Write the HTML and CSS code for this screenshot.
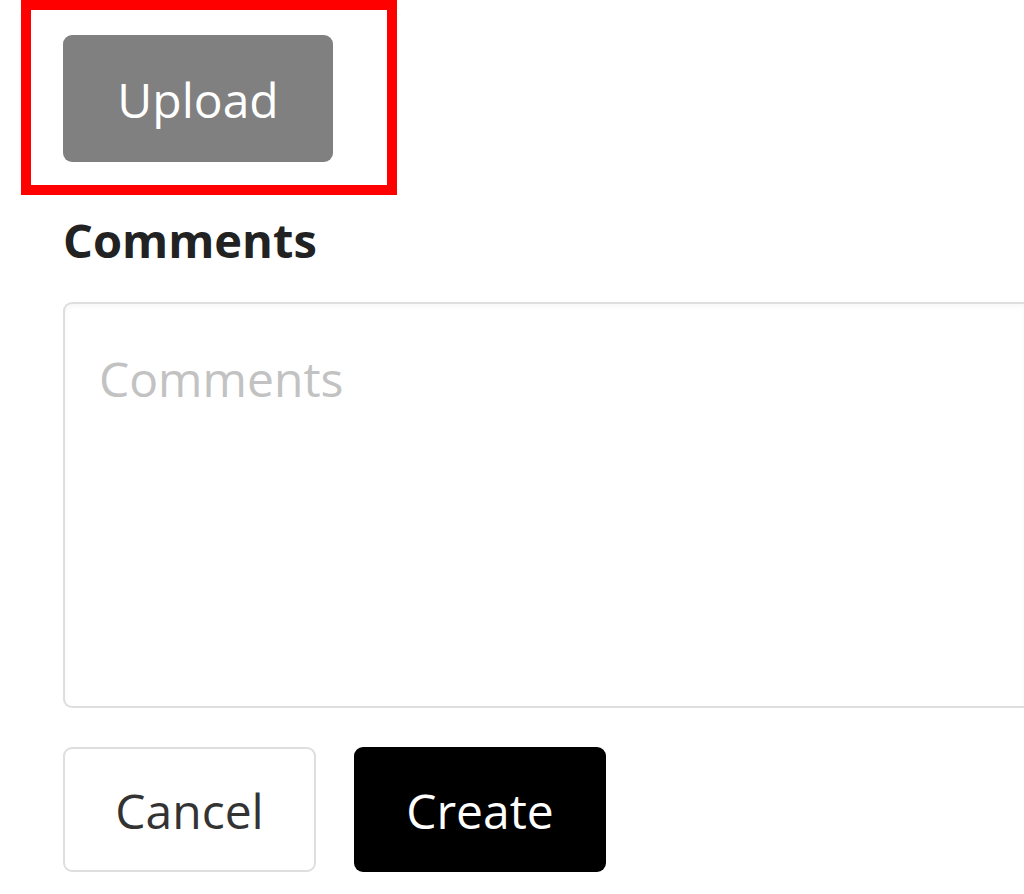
FILE: index.html
```html
<!DOCTYPE html>
<html>
<head>
    <title>New Item</title>
    <link rel="stylesheet" href="styles.css">
</head>
<body>
    <div class="upload-frame">
        <button class="btn btn-upload" type="button">Upload</button>
    </div>

    <form class="item-form">
        <label class="field-label" for="comments">Comments</label>
        <textarea class="comments" id="comments" placeholder="Comments"></textarea>
        <div class="actions">
            <button class="btn btn-cancel" type="button">Cancel</button>
            <button class="btn btn-create" type="submit">Create</button>
        </div>
    </form>
</body>
</html>
```

FILE: styles.css
```css
body {
    font-family: "Open Sans", "Noto Sans", Arial, sans-serif;
    margin: 0;
    background: #ffffff;
    color: #212529;
    overflow: hidden;
}

.upload-frame {
    display: inline-block;
    margin-left: 21px;
    padding: 25px 54px 23px 32px;
    border: 10px solid #ff0000;
}

.btn {
    font-family: inherit;
    font-size: 48px;
    border-radius: 9px;
    cursor: pointer;
    line-height: 1;
    padding: 3px 0 0;
}

.btn-upload {
    display: block;
    width: 270px;
    height: 127px;
    background: #808080;
    color: #ffffff;
    border: none;
}

.item-form {
    padding-left: 63px;
}

.field-label {
    display: block;
    margin-top: 13px;
    font-size: 47px;
    font-weight: bold;
    line-height: 65px;
    color: #222222;
}

/* runs off the right edge in the original, so no right border here */
.comments {
    display: block;
    box-sizing: border-box;
    width: calc(100vw - 63px);
    height: 406px;
    margin-top: 29px;
    padding: 42px 34px 40px;
    border: 2px solid #dedede;
    border-right: none;
    border-radius: 9px 0 0 9px;
    font-family: inherit;
    font-size: 48px;
    line-height: 65px;
    color: #333333;
    resize: none;
    outline: none;
    box-shadow: inset 0 3px 4px rgba(0,0,0,0.03);
}

.comments::placeholder {
    color: #c2c2c2;
}

.actions {
    display: flex;
    gap: 38px;
    margin-top: 39px;
}

.btn-cancel {
    width: 253px;
    height: 125px;
    background: #ffffff;
    color: #333333;
    border: 2px solid #dedede;
}

.btn-create {
    width: 252px;
    height: 125px;
    background: #000000;
    color: #ffffff;
    border: none;
}
```
